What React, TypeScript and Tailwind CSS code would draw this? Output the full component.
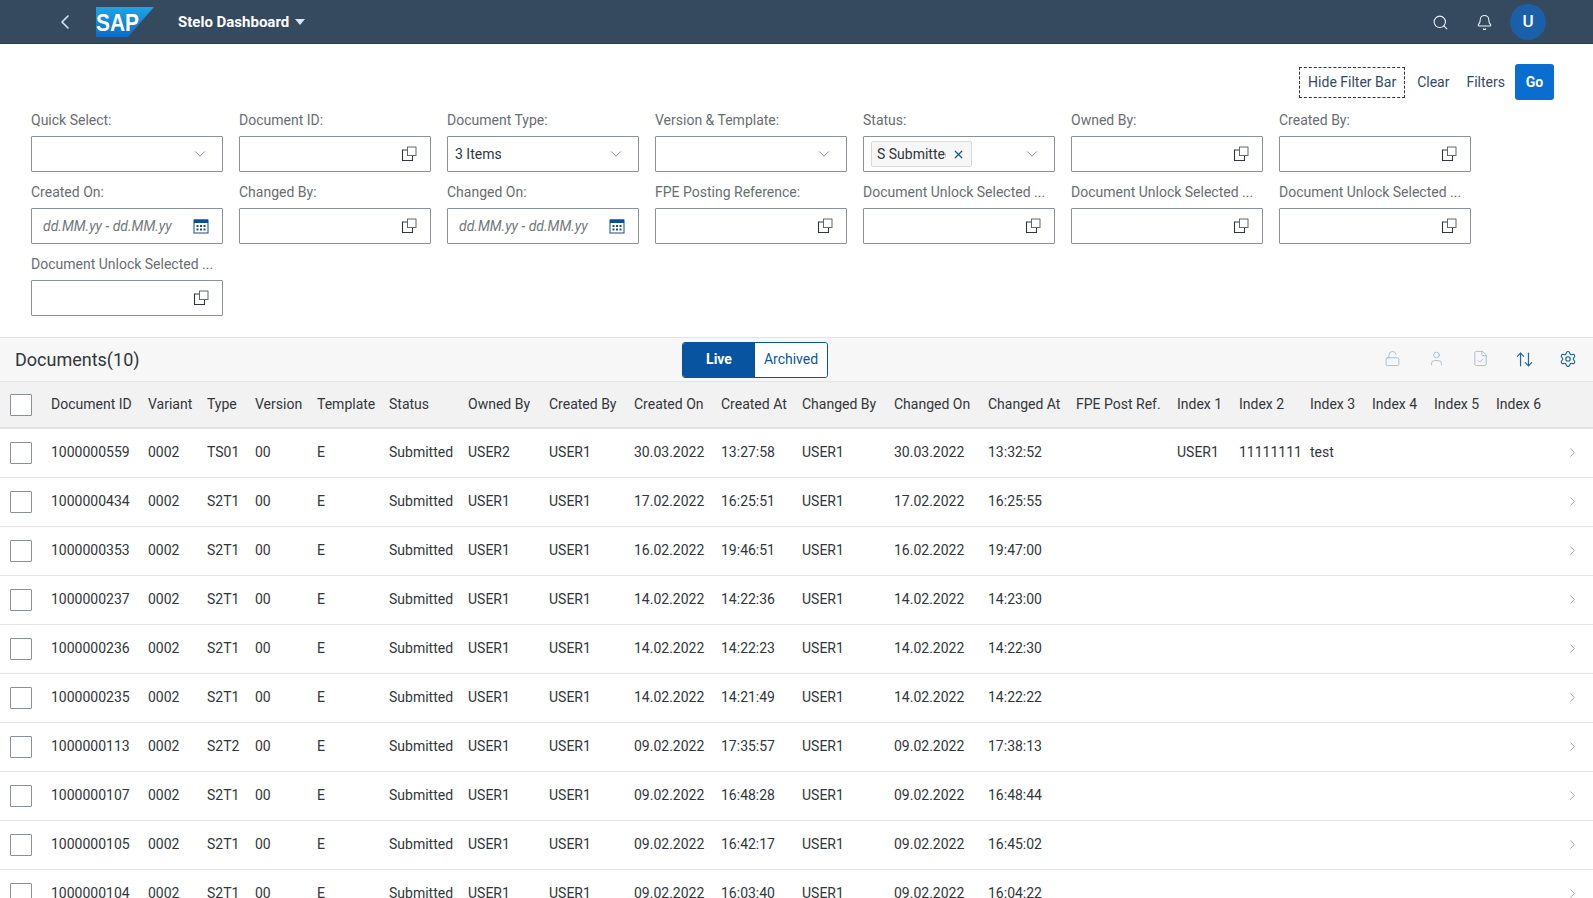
import { ArrowUpDown, Bell, ChevronDown, ChevronLeft, ChevronRight, FileCheck, LockOpen, Search, Settings, User, X } from "lucide-react";

const font = { fontFamily: "Roboto, 'Liberation Sans', sans-serif" };

const columns = [
  { label: "", width: "w-[51px]" },
  { label: "Document ID", width: "w-[97px]" },
  { label: "Variant", width: "w-[59px]" },
  { label: "Type", width: "w-[48px]" },
  { label: "Version", width: "w-[62px]" },
  { label: "Template", width: "w-[72px]" },
  { label: "Status", width: "w-[79px]" },
  { label: "Owned By", width: "w-[81px]" },
  { label: "Created By", width: "w-[85px]" },
  { label: "Created On", width: "w-[87px]" },
  { label: "Created At", width: "w-[81px]" },
  { label: "Changed By", width: "w-[92px]" },
  { label: "Changed On", width: "w-[94px]" },
  { label: "Changed At", width: "w-[88px]" },
  { label: "FPE Post Ref.", width: "w-[101px]" },
  { label: "Index 1", width: "w-[62px]" },
  { label: "Index 2", width: "w-[71px]" },
  { label: "Index 3", width: "w-[62px]" },
  { label: "Index 4", width: "w-[62px]" },
  { label: "Index 5", width: "w-[62px]" },
  { label: "Index 6", width: "w-[62px]" },
  { label: "", width: "w-[35px]" },
];

const rows = [
  ["1000000559", "0002", "TS01", "00", "E", "Submitted", "USER2", "USER1", "30.03.2022", "13:27:58", "USER1", "30.03.2022", "13:32:52", "", "USER1", "11111111", "test"],
  ["1000000434", "0002", "S2T1", "00", "E", "Submitted", "USER1", "USER1", "17.02.2022", "16:25:51", "USER1", "17.02.2022", "16:25:55"],
  ["1000000353", "0002", "S2T1", "00", "E", "Submitted", "USER1", "USER1", "16.02.2022", "19:46:51", "USER1", "16.02.2022", "19:47:00"],
  ["1000000237", "0002", "S2T1", "00", "E", "Submitted", "USER1", "USER1", "14.02.2022", "14:22:36", "USER1", "14.02.2022", "14:23:00"],
  ["1000000236", "0002", "S2T1", "00", "E", "Submitted", "USER1", "USER1", "14.02.2022", "14:22:23", "USER1", "14.02.2022", "14:22:30"],
  ["1000000235", "0002", "S2T1", "00", "E", "Submitted", "USER1", "USER1", "14.02.2022", "14:21:49", "USER1", "14.02.2022", "14:22:22"],
  ["1000000113", "0002", "S2T2", "00", "E", "Submitted", "USER1", "USER1", "09.02.2022", "17:35:57", "USER1", "09.02.2022", "17:38:13"],
  ["1000000107", "0002", "S2T1", "00", "E", "Submitted", "USER1", "USER1", "09.02.2022", "16:48:28", "USER1", "09.02.2022", "16:48:44"],
  ["1000000105", "0002", "S2T1", "00", "E", "Submitted", "USER1", "USER1", "09.02.2022", "16:42:17", "USER1", "09.02.2022", "16:45:02"],
  ["1000000104", "0002", "S2T1", "00", "E", "Submitted", "USER1", "USER1", "09.02.2022", "16:03:40", "USER1", "09.02.2022", "16:04:22"],
];

function SapLogo() {
  return (
    <svg width="58" height="30" viewBox="0 0 58 30">
      <defs>
        <linearGradient id="sap" x1="0" y1="0" x2="0" y2="1">
          <stop offset="0" stopColor="#1ea5e6" />
          <stop offset="1" stopColor="#0a6cc4" />
        </linearGradient>
      </defs>
      <polygon points="0,0 58,0 32,30 0,30" fill="url(#sap)" />
      <text x="0" y="24" fill="#fff" fontSize="24" fontWeight="700" textLength="43" lengthAdjust="spacingAndGlyphs" fontFamily="'Liberation Sans', sans-serif">
        SAP
      </text>
    </svg>
  );
}

function ValueHelpIcon() {
  return (
    <svg width="16" height="16" viewBox="0 0 16 16" fill="none" className="shrink-0">
      <path d="M6.5 4H1.5V14.5H11.5V9.5" stroke="#32363a" strokeWidth="1.1" />
      <rect x="6.5" y="1" width="8.5" height="8.5" stroke="#5d6a77" strokeWidth="1" />
    </svg>
  );
}

function CalendarIcon() {
  return (
    <svg width="16" height="16" viewBox="0 0 16 16" className="shrink-0">
      <rect x="1" y="2" width="14" height="13" fill="#fff" stroke="#0a4f8f" strokeWidth="1" />
      <rect x="1" y="1.5" width="14" height="3.5" fill="#0a4f8f" />
      <g fill="#354a5f">
        <rect x="3.5" y="7" width="2" height="2" />
        <rect x="7" y="7" width="2" height="2" />
        <rect x="10.5" y="7" width="2" height="2" />
        <rect x="3.5" y="10.5" width="2" height="2" />
        <rect x="7" y="10.5" width="2" height="2" />
        <rect x="10.5" y="10.5" width="2" height="2" />
      </g>
    </svg>
  );
}

function Field({ label, children }: { label: string; children?: React.ReactNode }) {
  return (
    <div>
      <div className="h-[26px] text-[14px] leading-[20px] text-[#6a6d70] whitespace-nowrap">{label}</div>
      <div className="flex h-9 items-center justify-between rounded-[1px] border border-[#89919a] bg-white pl-[7px] pr-[13px] text-[14px] text-[#32363a]">
        {children}
      </div>
    </div>
  );
}

function ValueHelp({ label }: { label: string }) {
  return (
    <Field label={label}>
      <span />
      <ValueHelpIcon />
    </Field>
  );
}

function Select({ label, value }: { label: string; value?: string }) {
  return (
    <Field label={label}>
      <span>{value}</span>
      <ChevronDown size={18} strokeWidth={1} className="text-[#5d6a77]" />
    </Field>
  );
}

function DateRange({ label }: { label: string }) {
  return (
    <Field label={label}>
      <span className="pl-1 italic text-[#74777a]">dd.MM.yy - dd.MM.yy</span>
      <CalendarIcon />
    </Field>
  );
}

export default function App() {
  return (
    <div className="flex h-screen flex-col overflow-hidden bg-white" style={font}>
      <header className="flex h-11 shrink-0 items-center bg-[#354a5f] text-white shadow-[inset_0_-1px_0_#2c3e50]">
        <ChevronLeft size={24} strokeWidth={1.6} className="ml-[53px] text-[#d1e8ff]" />
        <div className="ml-[19px]">
          <SapLogo />
        </div>
        <span className="ml-[24px] text-[15px] font-bold">Stelo Dashboard</span>
        <svg width="10" height="6" viewBox="0 0 10 6" className="ml-[6px]">
          <polygon points="0,0 10,0 5,6" fill="#d1e8ff" />
        </svg>
        <div className="ml-auto flex items-center">
          <Search size={17} strokeWidth={1.5} className="text-[#e8f3ff]" />
          <Bell size={17} strokeWidth={1.5} className="ml-[27px] text-[#e8f3ff]" />
          <div className="ml-[17px] mr-[47px] flex h-9 w-9 items-center justify-center rounded-full bg-[#1a5fa8] text-[17px] font-medium">U</div>
        </div>
      </header>

      <section className="shrink-0 px-[31px] pb-[21px] pt-5">
        <div className="flex h-9 items-center justify-end pr-[8px] text-[14px] text-[#354a5f]">
          <button className="h-[31px] border border-dashed border-[#32363a] px-2">Hide Filter Bar</button>
          <button className="ml-3">Clear</button>
          <button className="ml-[17px]">Filters</button>
          <button className="ml-[10px] h-9 w-[39px] rounded-[3px] bg-[#0a6ed1] font-bold text-white">Go</button>
        </div>
        <div className="mt-[10px] grid grid-cols-[repeat(7,192px)] gap-x-4 gap-y-[10px]">
          <Select label="Quick Select:" />
          <ValueHelp label="Document ID:" />
          <Select label="Document Type:" value="3 Items" />
          <Select label="Version & Template:" />
          <Field label="Status:">
            <span className="flex h-[26px] items-center rounded-[2px] border border-[#d5dadd] bg-[#f7f7f7] pl-[5px] pr-[6px]">
              <span className="w-[69px] overflow-hidden whitespace-nowrap">S Submitted</span>
              <X size={13} strokeWidth={2.2} className="ml-[6px] text-[#0a5a8f]" />
            </span>
            <ChevronDown size={18} strokeWidth={1} className="text-[#5d6a77]" />
          </Field>
          <ValueHelp label="Owned By:" />
          <ValueHelp label="Created By:" />
          <DateRange label="Created On:" />
          <ValueHelp label="Changed By:" />
          <DateRange label="Changed On:" />
          <ValueHelp label="FPE Posting Reference:" />
          <ValueHelp label="Document Unlock Selected ..." />
          <ValueHelp label="Document Unlock Selected ..." />
          <ValueHelp label="Document Unlock Selected ..." />
          <ValueHelp label="Document Unlock Selected ..." />
        </div>
      </section>

      <div className="flex h-[45px] shrink-0 items-center border-y border-[#e4e4e4] bg-[#f7f7f7]">
        <h2 className="w-[682px] pl-[15px] text-[18px] text-[#32363a]">Documents(10)</h2>
        <div className="flex h-9 w-[146px] overflow-hidden rounded-[3px] border border-[#0854a0] text-[14px]">
          <span className="flex w-[72px] items-center justify-center bg-[#0854a0] font-bold text-white">Live</span>
          <span className="flex flex-1 items-center justify-center bg-white text-[#0854a0]">Archived</span>
        </div>
        <div className="ml-auto flex pr-[3px]">
          <span className="flex w-11 justify-center"><LockOpen size={17} strokeWidth={1.2} className="text-[#9ab8d0]" /></span>
          <span className="flex w-11 justify-center"><User size={17} strokeWidth={1.2} className="text-[#9ab8d0]" /></span>
          <span className="flex w-11 justify-center"><FileCheck size={17} strokeWidth={1.2} className="text-[#9ab8d0]" /></span>
          <span className="flex w-11 justify-center"><ArrowUpDown size={19} strokeWidth={1.5} className="text-[#1b6aa8]" /></span>
          <span className="flex w-11 justify-center"><Settings size={18} strokeWidth={1.4} className="text-[#0a5a8f]" /></span>
        </div>
      </div>

      <table className="w-full table-fixed border-collapse text-[14px] text-[#32363a]">
        <colgroup>
          {columns.map((c, i) => (
            <col key={i} className={c.width} />
          ))}
        </colgroup>
        <thead>
          <tr className="h-[46px] border-b-2 border-[#e4e4e4] bg-[#f2f2f2]">
            {columns.map((c, i) => (
              <th key={i} className="p-0 text-left font-normal whitespace-nowrap">
                {i === 0 ? <Checkbox /> : c.label}
              </th>
            ))}
          </tr>
        </thead>
        <tbody>
          {rows.map((row) => (
            <tr key={row[0]} className="h-[49px] border-b border-[#e4e4e4]">
              <td className="p-0"><Checkbox /></td>
              {row.map((cell, i) => (
                <td key={i} className="p-0 whitespace-nowrap">{cell}</td>
              ))}
              {Array.from({ length: 20 - row.length }).map((_, i) => (
                <td key={i} className="p-0" />
              ))}
              <td className="p-0 pl-[7px]"><ChevronRight size={15} strokeWidth={1.2} className="text-[#7a8591]" /></td>
            </tr>
          ))}
        </tbody>
      </table>
    </div>
  );
}

function Checkbox() {
  return <div className="ml-[10px] h-[22px] w-[22px] rounded-[1px] border border-[#89919a] bg-white" />;
}
